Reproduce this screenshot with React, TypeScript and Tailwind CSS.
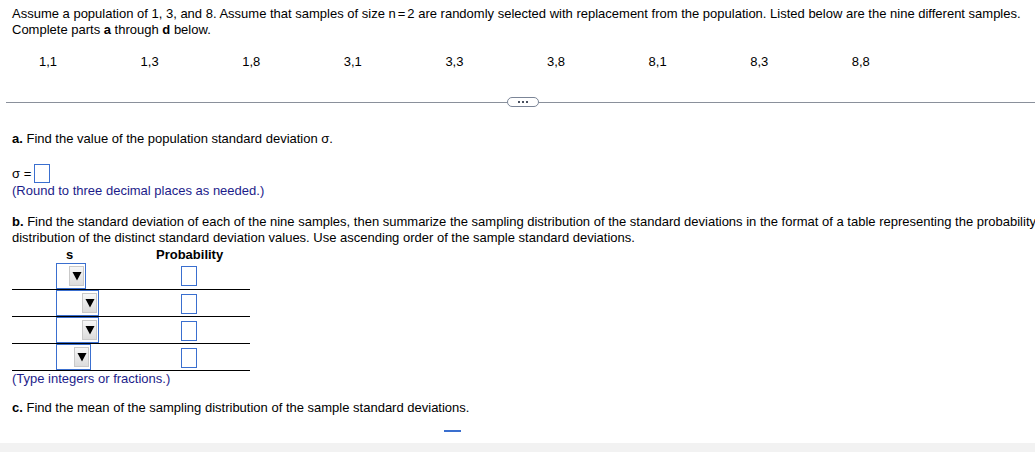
const samples = ["1,1", "1,3", "1,8", "3,1", "3,3", "3,8", "8,1", "8,3", "8,8"]

// width of the selected-value area in each dropdown
const rows = [12, 25, 25, 17]

function Dropdown({ pad }: { pad: number }) {
  return (
    <div className="inline-flex h-[26px] items-center border border-[#3a6fcf] pr-[1px] align-top">
      <div style={{ width: pad }} />
      <div className="flex h-[20px] w-[15px] items-center justify-center border border-[#c9c9c9] bg-gradient-to-b from-[#f7f7f7] to-[#dcdcdc]">
        <svg width="10" height="10" viewBox="0 0 10 10">
          <path d="M0.5 1 L9.5 1 L5 9.5 Z" fill="#000" />
        </svg>
      </div>
    </div>
  )
}

function AnswerBox({ h = 20 }: { h?: number }) {
  return <div className="w-[16px] border border-[#3a6fcf] bg-white" style={{ height: h }} />
}

export default function App() {
  return (
    <div className="relative h-[452px] w-[1035px] overflow-hidden bg-white font-['Liberation_Sans',Arial,sans-serif] text-[13px] leading-[16px] text-black">
      <div className="px-[12px] pt-[6px]">
        <p>
          Assume a population of 1, 3, and 8. Assume that samples of size n<span className="mx-[2px]">=</span>2 are
          randomly selected with replacement from the population. Listed below are the nine different samples.
          <br />
          Complete parts <b>a</b> through <b>d</b> below.
        </p>
      </div>

      <div className="mt-[16px] flex pl-[39px]">
        {samples.map((s) => (
          <div key={s} className="w-[101.6px] shrink-0">
            {s}
          </div>
        ))}
      </div>

      <div className="mt-[27px] flex h-[10px] items-center pl-[6px]">
        <div className="h-px w-[501px] bg-[#8a909b]" />
        <div className="flex h-[10px] w-[32px] items-center justify-center gap-[2px] rounded-full border border-[#7b8597] bg-white">
          <span className="h-[2px] w-[2px] bg-[#4a5160]" />
          <span className="h-[2px] w-[2px] bg-[#4a5160]" />
          <span className="h-[2px] w-[2px] bg-[#4a5160]" />
        </div>
        <div className="h-px flex-1 bg-[#8a909b]" />
      </div>

      <div className="px-[12px]">
        <p className="mt-[24px]">
          <b>a.</b> Find the value of the population standard deviation σ.
        </p>

        <div className="mt-[17px] flex items-center gap-[3px]">
          <span>σ =</span>
          <AnswerBox h={19} />
        </div>
        <p className="text-[#1c1c8a]">(Round to three decimal places as needed.)</p>

        <p className="mt-[15px] whitespace-nowrap">
          <b>b.</b> Find the standard deviation of each of the nine samples, then summarize the sampling distribution of
          the standard deviations in the format of a table representing the probability
          <br />
          distribution of the distinct standard deviation values. Use ascending order of the sample standard
          deviations.
        </p>

        <div className="mt-[1px] w-[238px]">
          <div className="flex font-bold">
            <div className="w-[118px] pl-[54px]">s</div>
            <div className="w-[120px] pl-[26px]">Probability</div>
          </div>
          {rows.map((pad, i) => (
            <div key={i} className="flex h-[27px] items-start border-b border-black">
              <div className="w-[118px] pl-[44px]">
                <Dropdown pad={pad} />
              </div>
              <div className={`w-[120px] pl-[51px] ${i === 0 ? "pt-[3px]" : "pt-[4px]"}`}>
                <AnswerBox h={20} />
              </div>
            </div>
          ))}
        </div>
        <p className="text-[#1c1c8a]">(Type integers or fractions.)</p>

        <p className="mt-[13px]">
          <b>c.</b> Find the mean of the sampling distribution of the sample standard deviations.
        </p>
        <div className="ml-[432px] mt-[14px] h-[2px] w-[17px] bg-[#3a6fcf]" />
      </div>

      <div className="absolute bottom-0 left-0 h-[9px] w-full bg-[#f2f2f2]" />
    </div>
  )
}
